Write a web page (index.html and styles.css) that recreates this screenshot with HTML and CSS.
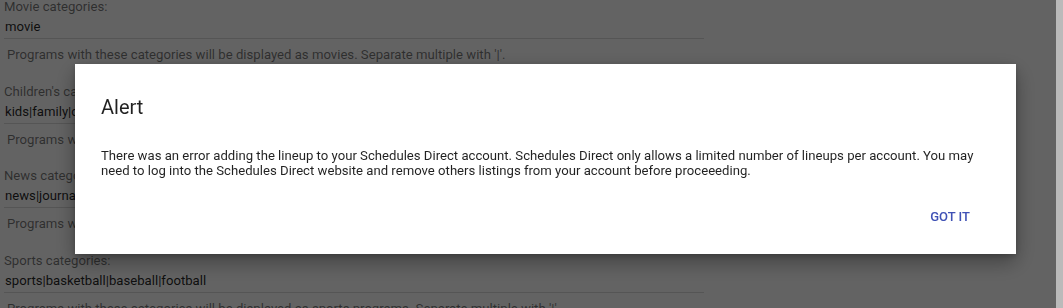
FILE: index.html
```html
<!DOCTYPE html>
<html>
<head>
<meta charset="utf-8">
<link rel="stylesheet" href="styles.css">
</head>
<body>
<div class="page">
  <div class="field first">
    <div class="label">Movie categories:</div>
    <div class="input">movie</div>
    <div class="help">Programs with these categories will be displayed as movies. Separate multiple with '|'.</div>
  </div>
  <div class="field">
    <div class="label">Children's categories:</div>
    <div class="input">kids|family|children</div>
    <div class="help">Programs with these categories will be displayed as children's programs. Separate multiple with '|'.</div>
  </div>
  <div class="field">
    <div class="label">News categories:</div>
    <div class="input">news|journalism</div>
    <div class="help">Programs with these categories will be displayed as news programs. Separate multiple with '|'.</div>
  </div>
  <div class="field">
    <div class="label">Sports categories:</div>
    <div class="input">sports|basketball|baseball|football</div>
    <div class="help">Programs with these categories will be displayed as sports programs. Separate multiple with '|'.</div>
  </div>
</div>
<div class="overlay"></div>
<div class="scrollbar"></div>
<div class="dialog">
  <h2 class="title">Alert</h2>
  <p class="message">There was an error adding the lineup to your Schedules Direct account. Schedules Direct only allows a limited number of lineups per account. You may need to log into the Schedules Direct website and remove others listings from your account before proceeeding.</p>
  <div class="actions"><span class="btn">GOT IT</span></div>
</div>
</body>
</html>
```
FILE: styles.css
```css
html, body {
  margin: 0;
  padding: 0;
  background: #fff;
  overflow: hidden;
  width: 1063px;
  height: 308px;
}
body {
  font-family: Roboto, "Noto Sans", sans-serif;
  font-size: 13.15px;
}
.page {
  width: 700px;
  padding-left: 4px;
}
.field {
  height: 84.5px;
}
.field.first {
  margin-top: -1px;
}
.label {
  line-height: 16px;
  color: rgba(0, 0, 0, 0.54);
}
.input {
  padding: 4px 0 3px 1px;
  line-height: 16px;
  color: rgba(0, 0, 0, 0.87);
  border-bottom: 1px solid rgba(0, 0, 0, 0.14);
}
.help {
  margin-top: 8px;
  padding-left: 3px;
  line-height: 16px;
  color: rgba(0, 0, 0, 0.54);
  white-space: nowrap;
}
.overlay {
  position: fixed;
  inset: 0;
  background: rgba(0, 0, 0, 0.61);
}
.scrollbar {
  position: fixed;
  top: 0;
  right: 0;
  width: 7px;
  height: 308px;
  background: #bababa;
}
.dialog {
  position: fixed;
  left: 75px;
  top: 64px;
  width: 941px;
  height: 190px;
  box-sizing: border-box;
  background: #fff;
  padding: 0 26px;
  box-shadow: 0 8px 20px rgba(0, 0, 0, 0.35), 0 2px 6px rgba(0, 0, 0, 0.2);
}
.title {
  margin: 0;
  padding-top: 31px;
  font-size: 20px;
  font-weight: 400;
  line-height: 24px;
  color: rgba(0, 0, 0, 0.87);
}
.message {
  margin: 29px 0 0;
  font-size: 13.15px;
  line-height: 15px;
  color: rgba(0, 0, 0, 0.87);
}
.actions {
  display: flex;
  justify-content: flex-end;
  margin-top: 31px;
  padding-right: 20px;
}
.btn {
  font-size: 13px;
  font-weight: 500;
  line-height: 16px;
  color: #3f51b5;
}
```
